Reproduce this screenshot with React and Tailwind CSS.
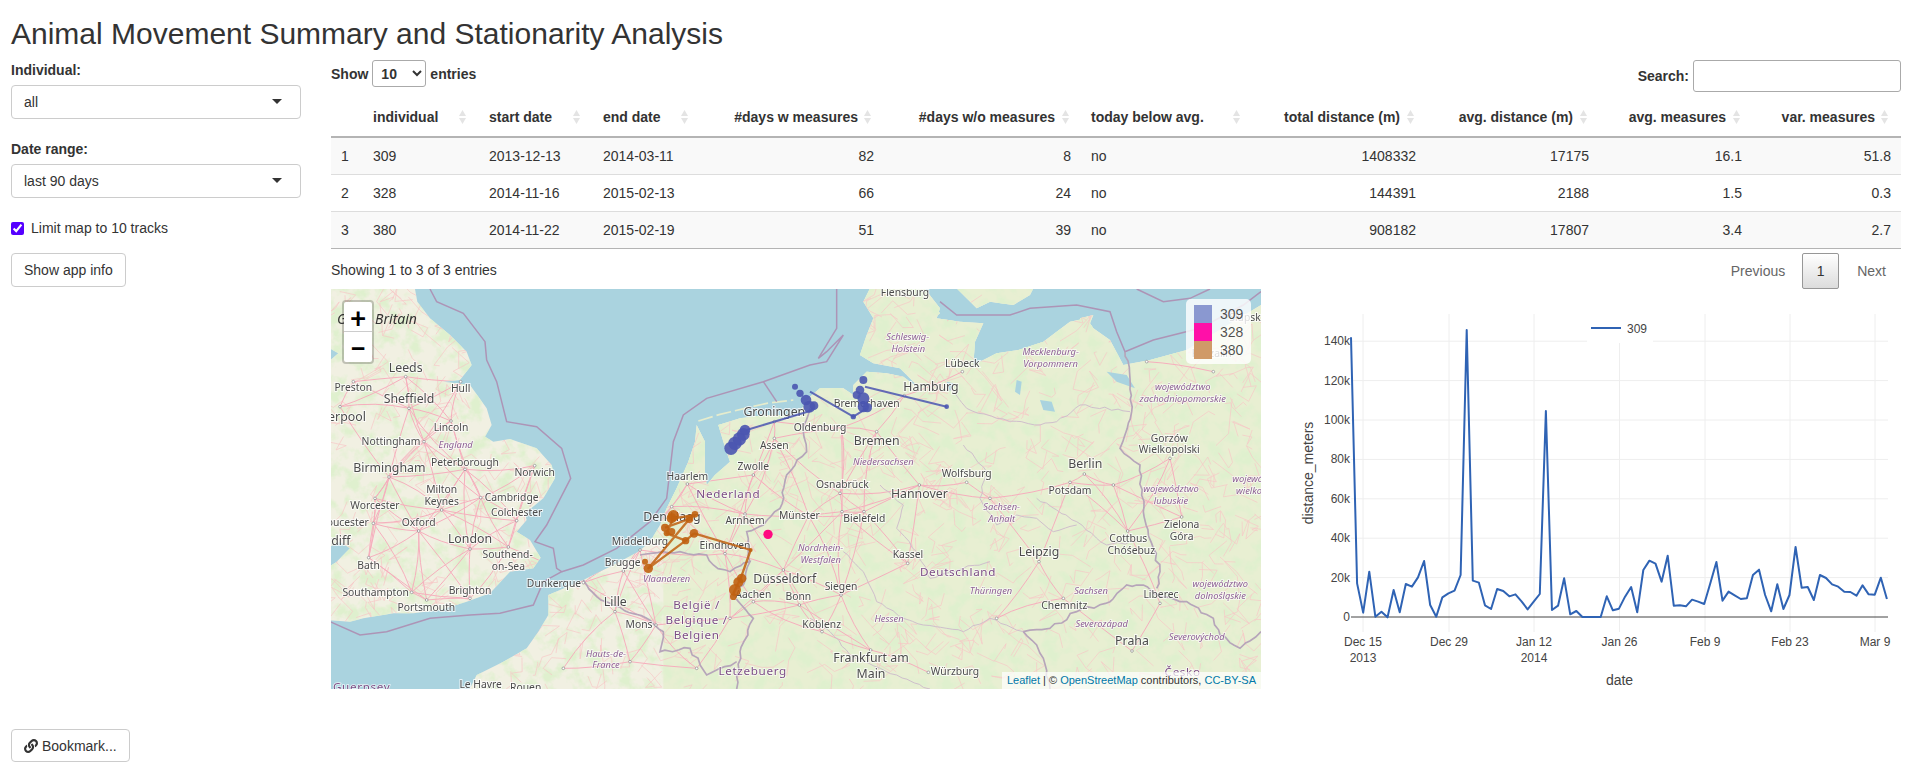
import React from 'react';
import { FaLink } from 'react-icons/fa';

const columns = [
  { label: '', w: 32 },
  { label: 'individual', w: 116, sort: 13 },
  { label: 'start date', w: 114, sort: 13 },
  { label: 'end date', w: 108, sort: 13 },
  { label: '#days w measures', w: 183, num: true, sort: 13 },
  { label: '#days w/o measures', w: 197, num: true, sort: 12 },
  { label: 'today below avg.', w: 172, sort: 13 },
  { label: 'total distance (m)', w: 173, num: true, sort: 12 },
  { label: 'avg. distance (m)', w: 173, num: true, sort: 12 },
  { label: 'avg. measures', w: 153, num: true, sort: 12 },
  { label: 'var. measures', w: 149, num: true, sort: 13 },
];

const rows = [
  ['1', '309', '2013-12-13', '2014-03-11', '82', '8', 'no', '1408332', '17175', '16.1', '51.8'],
  ['2', '328', '2014-11-16', '2015-02-13', '66', '24', 'no', '144391', '2188', '1.5', '0.3'],
  ['3', '380', '2014-11-22', '2015-02-19', '51', '39', 'no', '908182', '17807', '3.4', '2.7'],
];

function SortIcon({ right }) {
  return (
    <svg className="absolute top-[12px]" style={{ right }} width="7" height="14" viewBox="0 0 7 14">
      <path d="M3.5 0 L7 6 L0 6 Z" fill="#e4e4e4" />
      <path d="M3.5 14 L7 8 L0 8 Z" fill="#e4e4e4" />
    </svg>
  );
}

function Picker({ value }) {
  return (
    <div className="flex items-center justify-between w-[290px] h-[34px] border border-[#ccc] rounded-[4px] pl-3 pr-[18px] bg-white">
      <span>{value}</span>
      <span className="w-0 h-0 border-x-[5px] border-x-transparent border-t-[5px] border-t-[#333] -mt-0.5" />
    </div>
  );
}

function Sidebar() {
  return (
    <aside className="w-[331px] pl-[11px] shrink-0">
      <div className="font-bold h-5 mb-[5px]">Individual:</div>
      <Picker value="all" />
      <div className="font-bold h-5 mb-[5px] mt-5">Date range:</div>
      <Picker value="last 90 days" />
      <label className="flex items-center gap-[7px] h-5 mt-5">
        <input type="checkbox" defaultChecked className="w-[13px] h-[13px] accent-[#5500ff]" />
        Limit map to 10 tracks
      </label>
      <button className="block mt-[15px] h-[34px] px-3 border border-[#ccc] rounded-[4px] bg-white">Show app info</button>
    </aside>
  );
}

function DataTable() {
  return (
    <table className="w-full table-fixed border-separate border-spacing-0">
      <colgroup>
        {columns.map((c, i) => <col key={i} style={{ width: c.w }} />)}
      </colgroup>
      <thead>
        <tr>
          {columns.map((c, i) => (
            <th key={i} className={`relative h-[40px] border-b-2 border-[#b4b4b4] font-bold ${c.num ? 'text-right pr-[26px]' : 'text-left pl-[10px]'}`}>
              {c.label}
              {c.sort && <SortIcon right={c.sort} />}
            </th>
          ))}
        </tr>
      </thead>
      <tbody>
        {rows.map((r, ri) => (
          <tr key={ri} className={ri % 2 === 0 ? 'bg-[#f9f9f9]' : 'bg-white'}>
            {r.map((v, i) => (
              <td key={i} className={`h-[37px] px-[10px] border-b ${ri === 2 ? 'border-[#b4b4b4]' : 'border-[#ddd]'} ${columns[i].num ? 'text-right' : 'text-left'}`}>{v}</td>
            ))}
          </tr>
        ))}
      </tbody>
    </table>
  );
}

// map tiles, all in 3x coordinates of the page (origin at 330,285)
function rng(seed) {
  let a = seed;
  return () => {
    a |= 0; a = (a + 0x6d2b79f5) | 0;
    let t = Math.imul(a ^ (a >>> 15), 1 | a);
    t = (t + Math.imul(t ^ (t >>> 7), 61 | t)) ^ t;
    return ((t ^ (t >>> 14)) >>> 0) / 4294967296;
  };
}

const pts = (list) => list.map(([x, y]) => `${x},${y}`).join(' ');

// break a straight border into small wobbly steps
function wobble(list, r, amp = 9) {
  const out = [list[0]];
  for (let i = 1; i < list.length; i++) {
    const [ax, ay] = list[i - 1];
    const [bx, by] = list[i];
    const steps = Math.max(2, Math.round(Math.hypot(bx - ax, by - ay) / 18));
    for (let k = 1; k <= steps; k++) {
      const t = k / steps;
      const j = k === steps ? 0 : amp;
      out.push([ax + (bx - ax) * t + (r() - 0.5) * j, ay + (by - ay) * t + (r() - 0.5) * j]);
    }
  }
  return out;
}

const britain = [[-10, -10], [255, -10], [255, 12], [262, 50], [300, 100], [360, 150], [410, 200], [425, 240], [390, 285], [340, 290], [420, 300], [470, 370], [485, 420], [465, 455], [490, 470], [540, 462], [620, 490], [665, 540], [675, 580], [640, 640], [585, 685], [590, 705], [560, 740], [600, 765], [632, 818], [610, 850], [540, 860], [480, 925], [410, 950], [330, 975], [250, 985], [190, 985], [100, 1000], [60, 1010], [-10, 1005], [-10, 850], [20, 830], [60, 790], [30, 770], [-10, 790], [-10, 235], [25, 205], [-10, 185]];

const mainland = [[415, 1220], [440, 1170], [520, 1130], [590, 1090], [625, 1040], [655, 990], [655, 930], [760, 885], [850, 840], [925, 800], [960, 770], [990, 720], [1010, 670], [1040, 610], [1075, 530], [1095, 470], [1100, 420], [1125, 470], [1125, 560], [1130, 600], [1155, 570], [1200, 530], [1180, 470], [1165, 420], [1230, 400], [1310, 390], [1400, 392], [1440, 335],
  [1470, 310], [1540, 310], [1570, 330], [1570, 300], [1610, 260], [1670, 265], [1720, 275], [1780, 320], [1710, 250], [1630, 235], [1590, 210], [1610, 150], [1630, 100], [1600, 50], [1630, -10], [1785, -10], [1785, 12], [1830, 70], [1820, 100], [1890, 110], [1960, 115], [1935, 170], [1930, 240], [2000, 205], [2065, 195], [2140, 170], [2220, 110], [2270, 100], [2290, 130], [2340, 165], [2380, 240], [2460, 225], [2570, 195], [2793, 60], [2830, 60], [2830, 1230], [415, 1230]];

const islands = [
  [[1860, -10], [1940, 70], [1980, 50], [2050, 60], [2100, 30], [2120, -10]],
  [[2250, 100], [2290, 90], [2270, 140]],
  [[1780, 90], [1810, 60], [1830, 85], [1800, 110]],
];

const water = [
  [[2330, 260], [2390, 270], [2415, 310], [2360, 290]],
  [[2130, 345], [2165, 350], [2175, 380], [2140, 375]],
  [[2060, 285], [2075, 290], [2070, 330], [2055, 320]],
  [[1850, 290], [1870, 295], [1860, 320]],
];

const coastStrips = [
  [[1105, 408], [1170, 388], [1245, 370], [1310, 355], [1390, 345]],
  [[1450, 345], [1510, 335]],
];

const seaBorders = [
  [[300, 12], [320, 50], [400, 85], [465, 170], [470, 225], [500, 290], [530, 410], [620, 425], [695, 490], [722, 580], [650, 720], [615, 770], [670, 790], [680, 850], [695, 860], [640, 890], [610, 960], [510, 985], [420, 990], [300, 1000], [170, 1040], [90, 1050], [0, 1010]],
  [[695, 860], [760, 840], [860, 790], [960, 710], [1010, 640], [1030, 470], [1060, 390], [1130, 340], [1300, 290], [1440, 240], [1490, 230], [1540, 150], [1490, 200], [1465, 220], [1520, 130], [1520, 12]],
  [[1300, 290], [1340, 350]],
  [[1830, 50], [1880, 90], [2040, 90], [2100, 70], [2240, 60], [2340, 80], [2360, 140], [2385, 200], [2470, 165], [2610, 130], [2740, 60], [2793, 20]],
  [[2420, 12], [2500, 50], [2580, 40], [2640, 12]],
];

const landBorders = [
  [[760, 885], [800, 935], [850, 960], [950, 1000], [1000, 1040], [990, 1100], [1080, 1090], [1130, 1170], [1220, 1130]],
  [[930, 810], [1050, 800], [1130, 810], [1150, 840], [1200, 860], [1260, 830], [1240, 900], [1210, 930], [1270, 1000], [1230, 1100], [1220, 1212]],
  [[1260, 830], [1250, 740], [1300, 720], [1350, 670], [1370, 570], [1430, 500], [1420, 440], [1440, 370]],
  [[2080, 1040], [2160, 1030], [2240, 980], [2340, 950], [2390, 900], [2440, 900], [2480, 930], [2570, 950], [2650, 1000], [2670, 1050], [2730, 1090], [2793, 1040]],
  [[2080, 1040], [2120, 1080], [2140, 1120], [2160, 1212]],
  [[2385, 200], [2400, 280], [2405, 380], [2370, 490], [2430, 540], [2440, 680], [2470, 790], [2490, 860], [2480, 910]],
];

const stateLines = [
  [[1860, 310], [1910, 370], [2000, 400], [2130, 420], [2180, 410], [2250, 360], [2400, 380]],
  [[1900, 480], [1970, 560], [1950, 640], [2000, 720], [2060, 690], [2120, 700], [2170, 740], [2240, 720]],
  [[1650, 600], [1720, 660], [1700, 730], [1760, 800], [1800, 880], [1900, 850], [1980, 830]],
  [[1540, 800], [1600, 860], [1640, 950], [1720, 1000], [1780, 1020], [1900, 1040], [1980, 1000], [2080, 1040]],
  [[1440, 1000], [1500, 1040], [1560, 1110], [1700, 1170], [1800, 1212]],
  [[2120, 640], [2240, 710], [2330, 780], [2420, 770]],
];

const nodes = [[70, 290], [227, 275], [392, 290], [237, 370], [30, 365], [363, 408], [282, 470], [177, 576], [405, 553], [614, 542], [335, 675], [135, 640], [452, 638], [560, 707], [130, 715], [266, 738], [420, 792], [535, 786], [116, 818], [245, 922], [420, 940], [290, 945], [760, 893], [855, 980], [978, 1020], [1072, 597], [1270, 570], [1333, 460], [1333, 410], [1245, 687], [930, 795], [1185, 806], [880, 858], [1360, 855], [1270, 950], [1408, 960], [1025, 665], [1535, 428], [1640, 440], [1530, 625], [1768, 600], [1910, 592], [1602, 680], [1733, 835], [2127, 830], [2263, 567], [2220, 592], [1723, 332], [1897, 260], [1725, 30], [2520, 520], [2393, 738], [2200, 940], [2490, 955], [2555, 696], [2406, 1098], [1622, 1095], [1795, 1162], [1476, 1040], [1533, 930], [1436, 692], [1536, 680], [2450, 230], [2350, 600], [2650, 260], [1980, 640], [2000, 1000], [1200, 1000], [1100, 1150], [700, 1150], [900, 1130]];

function buildScatter() {
  const r = rng(42);
  const roads = [];
  nodes.forEach((a, i) => {
    nodes.forEach((b, j) => {
      if (j <= i) return;
      const d = Math.hypot(a[0] - b[0], a[1] - b[1]);
      if (d > 260) return;
      const mx = (a[0] + b[0]) / 2 + (r() - 0.5) * d * 0.2;
      const my = (a[1] + b[1]) / 2 + (r() - 0.5) * d * 0.2;
      roads.push(`M${a[0]} ${a[1]} Q${mx} ${my} ${b[0]} ${b[1]}`);
    });
  });
  const minor = [];
  for (let i = 0; i < 900; i++) {
    let x = r() * 2800;
    let y = r() * 1210;
    let d = `M${x} ${y}`;
    for (let k = 0; k < 3; k++) {
      x += (r() - 0.5) * 110;
      y += (r() - 0.5) * 110;
      d += ` L${x} ${y}`;
    }
    minor.push(d);
  }
  return {
    roads,
    minor,
    seaBorders,
    landBorders: landBorders.map((p) => wobble(p, r)),
    stateLines: stateLines.map((p) => wobble(p, r, 7)),
  };
}

const scatter = buildScatter();

const S = 31, M = 37;
const cityLabels = [
  ['Leeds', 227, 250, M], ['Preston', 70, 310, S], ['Hull', 392, 312, S], ['Sheffield', 237, 345, M], ['Liverpool', 27, 398, M], ['Lincoln', 363, 430, S], ['Nottingham', 183, 472, S], ['Birmingham', 178, 550, M], ['Peterborough', 405, 535, S], ['Norwich', 614, 566, S], ['Milton', 335, 616, S], ['Keynes', 335, 653, S], ['Worcester', 135, 664, S], ['Cambridge', 545, 640, S], ['Colchester', 560, 686, S], ['Gloucester', 38, 715, S], ['Oxford', 266, 716, S], ['London', 420, 763, M], ['Cardiff', 3, 770, M], ['Bath', 116, 843, S], ['Southend-', 533, 810, S], ['on-Sea', 535, 846, S], ['Southampton', 137, 926, S], ['Brighton', 420, 920, S], ['Portsmouth', 289, 970, S], ['Dunkerque', 672, 897, S], ['Lille', 856, 953, M], ['Mons', 927, 1021, S], ['Le Havre', 452, 1202, S], ['Rouen', 587, 1210, S],
  ['Haarlem', 1072, 576, S], ['Zwolle', 1270, 548, S], ['Assen', 1333, 484, S], ['Groningen', 1333, 383, M], ['Oldenburg', 1470, 430, S], ['Münster', 1408, 693, S], ['Den Haag', 1026, 697, M], ['Arnhem', 1245, 710, S], ['Middelburg', 930, 772, S], ['Eindhoven', 1185, 785, S], ['Brugge', 878, 836, S], ['Düsseldorf', 1364, 885, M], ['Aachen', 1270, 930, S], ['Bonn', 1405, 938, S], ['Koblenz', 1475, 1020, S], ['Siegen', 1533, 908, S],
  ['Bremerhaven', 1610, 357, S], ['Bremen', 1640, 471, M], ['Osnabrück', 1537, 600, S], ['Hannover', 1768, 629, M], ['Wolfsburg', 1910, 568, S], ['Bielefeld', 1603, 704, S], ['Kassel', 1734, 812, S], ['Leipzig', 2127, 802, M], ['Berlin', 2266, 538, M], ['Potsdam', 2220, 620, S], ['Hamburg', 1803, 307, M], ['Lübeck', 1897, 238, S], ['Flensburg', 1725, 25, S], ['Gorzów', 2518, 462, S], ['Wielkopolski', 2518, 497, S], ['Zielona', 2555, 720, S], ['Góra', 2555, 756, S], ['Cottbus', 2395, 762, S], ['Chóśebuz', 2404, 798, S], ['Chemnitz', 2203, 965, S], ['Liberec', 2493, 930, S], ['Praha', 2406, 1070, M], ['Frankfurt am', 1623, 1122, M], ['Main', 1623, 1168, M], ['Würzburg', 1875, 1163, S], ['Koszalin', 2645, 207, S], ['Słupsk', 2745, 100, S],
];

const stateLabels = [
  ['England', 377, 482], ['Vlaanderen', 1010, 883], ['Hauts-de-', 828, 1107], ['France', 828, 1142], ['Nordrhein-', 1472, 790], ['Westfalen', 1472, 827], ['Niedersachsen', 1660, 532], ['Thüringen', 1983, 918], ['Sachsen-', 2015, 667], ['Anhalt', 2015, 702], ['Schleswig-', 1733, 158], ['Holstein', 1735, 194], ['Mecklenburg-', 2162, 203], ['Vorpommern', 2162, 238], ['województwo', 2558, 307], ['zachodniopomorskie', 2558, 342], ['województwo', 2790, 582], ['wielkopolskie', 2800, 618], ['województwo', 2523, 614], ['lubuskie', 2523, 650], ['Sachsen', 2283, 918], ['województwo', 2671, 899], ['dolnośląskie', 2671, 934], ['Severozápad', 2315, 1018], ['Severovýchod', 2600, 1057], ['Hessen', 1677, 1003],
];

const countryLabels = [
  ['Nederland', 1195, 630], ['België /', 1100, 963], ['Belgique /', 1100, 1008], ['Belgien', 1100, 1052], ['Letzebuerg', 1268, 1160], ['Deutschland', 1884, 864], ['Česko', 2558, 1165], ['Guernsey', 95, 1208],
];

const blueDots = [[1203, 490, 20], [1215, 475, 20], [1228, 462, 20], [1240, 448, 19], [1245, 435, 16], [1395, 305, 9], [1410, 325, 11], [1428, 345, 16], [1438, 365, 18], [1452, 362, 13], [1600, 285, 12], [1590, 315, 13], [1580, 330, 12], [1600, 340, 18], [1600, 365, 17], [1612, 368, 14], [1570, 395, 8], [1850, 365, 7]];
const orangeDots = [[1030, 692, 17], [1025, 700, 15], [1005, 728, 12], [1095, 688, 10], [1078, 702, 12], [1010, 745, 9], [1025, 740, 11], [1092, 745, 13], [1067, 767, 11], [955, 850, 14], [945, 830, 9], [1262, 795, 6], [1235, 880, 14], [1225, 892, 15], [1215, 915, 18], [1210, 935, 10]];

function MapTiles() {
  return (
    <svg viewBox="3 12 2790 1200" className="block w-full h-full">
      <defs>
        <clipPath id="land">
          <polygon points={pts(britain)} />
          <polygon points={pts(mainland)} />
          {islands.map((p, i) => <polygon key={i} points={pts(p)} />)}
        </clipPath>
        <filter id="soft" x="0" y="0" width="100%" height="100%">
          <feGaussianBlur stdDeviation="1.3" />
        </filter>
        <filter id="forest" x="0" y="0" width="100%" height="100%">
          <feTurbulence type="fractalNoise" baseFrequency="0.022" numOctaves="4" seed="7" />
          <feColorMatrix values="0 0 0 0 0.74  0 0 0 0 0.87  0 0 0 0 0.62  4 0 0 0 -1.75" />
        </filter>
      </defs>
      <g filter="url(#soft)">
        <rect x="-20" y="-20" width="2900" height="1300" fill="#aad3df" />
        <g clipPath="url(#land)">
          <rect x="-20" y="-20" width="2900" height="1300" fill="#f1f0e2" />
          <rect x="1000" y="-20" width="1880" height="1300" fill="#e8efd2" />
          <rect x="-20" y="-20" width="2900" height="1300" filter="url(#forest)" />
          {scatter.minor.map((d, i) => <path key={i} d={d} fill="none" stroke="#f7c6c6" strokeWidth="2" />)}
          {scatter.roads.map((d, i) => <path key={i} d={d} fill="none" stroke="#f6aebd" strokeWidth="3" />)}
        </g>
        {water.map((p, i) => <polygon key={i} points={pts(p)} fill="#aad3df" />)}
        {coastStrips.map((p, i) => <polyline key={i} points={pts(p)} fill="none" stroke="#e6eccd" strokeWidth="5" strokeDasharray="45 12" />)}
        {scatter.stateLines.map((p, i) => <polyline key={i} points={pts(p)} fill="none" stroke="#cfbfcc" strokeWidth="3" />)}
        {scatter.seaBorders.map((p, i) => <polyline key={i} points={pts(p)} fill="none" stroke="#ad94b6" strokeWidth="4.5" />)}
        {scatter.landBorders.map((p, i) => <polyline key={i} points={pts(p)} fill="none" stroke="#b6a5ba" strokeWidth="5" />)}
        {nodes.map(([x, y], i) => <circle key={i} cx={x} cy={y} r="4" fill="#fff" stroke="#888" strokeWidth="2" />)}
        <g fontFamily="'Noto Sans', sans-serif" textAnchor="middle" dominantBaseline="middle">
          <text x="141" y="105" fontSize="42" fontStyle="italic" fill="#333">Great Britain</text>
          {cityLabels.map(([t, x, y, s]) => (
            <text key={t} x={x} y={y} fontSize={s} fill="#4c4c4c" stroke="#ffffff" strokeOpacity="0.75" strokeWidth="6" paintOrder="stroke">{t}</text>
          ))}
          {stateLabels.map(([t, x, y], i) => (
            <text key={i} x={x} y={y} fontSize="28" fontStyle="italic" fill="#8c5f93" stroke="#ffffff" strokeOpacity="0.7" strokeWidth="5" paintOrder="stroke">{t}</text>
          ))}
          {countryLabels.map(([t, x, y]) => (
            <text key={t} x={x} y={y} fontSize="35" letterSpacing="2" fill="#7c4e85" stroke="#ffffff" strokeOpacity="0.7" strokeWidth="5" paintOrder="stroke">{t}</text>
          ))}
        </g>
      </g>
      <g fill="none" stroke="#4a55b0" strokeOpacity="0.85" strokeLinejoin="round">
        <polyline points="1250,435 1440,378 1450,370" strokeWidth="6" />
        <polyline points="1440,320 1570,395 1610,370" strokeWidth="6" />
        <polyline points="1605,305 1850,365" strokeWidth="6" />
      </g>
      {blueDots.map(([x, y, r], i) => <circle key={i} cx={x} cy={y} r={r} fill="#4a55b0" fillOpacity="0.9" />)}
      <g fill="none" stroke="#c0600f" strokeOpacity="0.85" strokeWidth="7" strokeLinejoin="round">
        <polyline points="1005,728 1078,702 955,850 1067,767 1010,745 1030,700 1095,690 1078,702" />
        <polyline points="1092,745 1262,795 1232,880 1210,925" />
        <polyline points="1067,767 1092,745" />
      </g>
      {orangeDots.map(([x, y, r], i) => <circle key={i} cx={x} cy={y} r={r} fill="#c0600f" fillOpacity="0.9" />)}
      <circle cx="1314" cy="748" r="14" fill="#ff0a80" />
    </svg>
  );
}

function LeafletMap() {
  return (
    <div className="relative w-[930px] h-[400px] overflow-hidden shrink-0">
      <MapTiles />
      <div className="absolute left-[11px] top-[11px] w-[32px] rounded-[4px] bg-white border-2 border-black/20 bg-clip-padding text-black font-bold font-[Lato,'Liberation_Sans',sans-serif]">
        <div className="flex items-center justify-center h-[30px] text-[28px] leading-none border-b border-[#ccc]">+</div>
        <div className="flex items-center justify-center h-[30px] text-[28px] leading-none">−</div>
      </div>
      <div className="absolute right-[10px] top-[10px] w-[65px] h-[65px] py-[6px] pl-[8px] rounded-[5px] bg-white/80 text-black/70 leading-[18px]">
        {[['#8a98d0', '309'], ['#ff10a8', '328'], ['#d09a68', '380']].map(([c, t]) => (
          <div key={t} className="flex h-[18px] gap-2">
            <span className="w-[18px] h-[18px]" style={{ backgroundColor: c }} />
            {t}
          </div>
        ))}
      </div>
      <div className="absolute right-0 bottom-0 h-[17px] px-[5px] bg-white/70 text-[11px] leading-[17px]">
        <a className="text-[#0078a8]">Leaflet</a> | © <a className="text-[#0078a8]">OpenStreetMap</a> contributors, <a className="text-[#0078a8]">CC-BY-SA</a>
      </div>
    </div>
  );
}

const series = [112, 850, 938, 815, 950, 935, 952, 870, 937, 852, 860, 832, 783, 915, 950, 892, 880, 872, 825, 90, 842, 848, 916, 927, 867, 873, 889, 883, 904, 928, 905, 882, 333, 930, 917, 835, 943, 933, 951, 951, 951, 951, 889, 931, 926, 890, 861, 937, 810, 782, 791, 845, 767, 917, 916, 919, 899, 905, 912, 850, 786, 902, 875, 886, 897, 895, 825, 809, 885, 934, 853, 927, 885, 741, 863, 861, 900, 825, 834, 853, 860, 875, 876, 887, 856, 883, 884, 833, 897];

const xTicks = [[1363, 'Dec 15', '2013'], [1449, 'Dec 29'], [1534, 'Jan 12', '2014'], [1619.5, 'Jan 26'], [1705, 'Feb 9'], [1790, 'Feb 23'], [1875, 'Mar 9']];
const yTicks = [0, 20, 40, 60, 80, 100, 120, 140];

function LineChart() {
  const line = series.map((v, i) => `${1351 + i * 6.09},${300 + v / 3}`).join(' ');
  return (
    <svg viewBox="1261 289 640 400" className="block w-[640px] h-[400px] shrink-0" fontFamily="'Liberation Sans', sans-serif">
      {xTicks.map(([x]) => <line key={x} x1={x} x2={x} y1="314" y2="632" stroke="#eeeeee" />)}
      {yTicks.slice(1).map((k) => {
        const y = 617 - k * 1.97;
        return <line key={k} x1="1351" x2="1888" y1={y} y2={y} stroke="#eeeeee" />;
      })}
      <rect x="1587" y="314" width="66" height="29" fill="#fff" />
      <line x1="1351" x2="1888" y1="617" y2="617" stroke="#444" />
      <polyline points={line} fill="none" stroke="#2f63b4" strokeWidth="2" strokeLinejoin="round" />
      <line x1="1591" x2="1621" y1="328" y2="328" stroke="#2f63b4" strokeWidth="2" />
      <text x="1627" y="333" fontSize="12" fill="#444">309</text>
      {yTicks.map((k) => (
        <text key={k} x="1350" y={621 - k * 1.97} fontSize="12" fill="#444" textAnchor="end">{k ? `${k}k` : '0'}</text>
      ))}
      {xTicks.map(([x, a, b]) => (
        <g key={x} fontSize="12" fill="#444" textAnchor="middle">
          <text x={x} y="646">{a}</text>
          {b && <text x={x} y="662">{b}</text>}
        </g>
      ))}
      <text x="1619.5" y="685" fontSize="14" fill="#444" textAnchor="middle">date</text>
      <text transform="translate(1313 473) rotate(-90)" fontSize="14" fill="#444" textAnchor="middle">distance_meters</text>
    </svg>
  );
}

export default function App() {
  return (
    <div className="w-[1910px] font-['Liberation_Sans',Arial,sans-serif] text-sm leading-5 text-[#333] bg-white">
      <h2 className="h-[60px] pt-[17px] pl-[11px] text-[30px] leading-[33px]">Animal Movement Summary and Stationarity Analysis</h2>
      <div className="flex">
        <Sidebar />
        <main className="w-[1570px]">
          <div className="flex justify-between h-[38px]">
            <label className="flex items-start gap-1 font-bold">
              <span className="mt-[4px]">Show</span>
              <select defaultValue="10" className="w-[54px] h-[27px] pl-1 border border-[#aaa] rounded-[3px] bg-white font-bold">
                <option value="10">10</option>
                <option value="25">25</option>
              </select>
              <span className="mt-[4px]">entries</span>
            </label>
            <label className="flex items-start gap-1 font-bold">
              <span className="mt-[6px]">Search:</span>
              <input className="w-[208px] h-[32px] border border-[#aaa] rounded-[3px] bg-white" />
            </label>
          </div>
          <DataTable />
          <div className="flex justify-between h-[40px]">
            <div className="pt-[11px]">Showing 1 to 3 of 3 entries</div>
            <div className="flex items-start pt-[4px] pr-[15px] text-[#666]">
              <span className="mt-[8px] mr-[17px]">Previous</span>
              <span className="flex items-center justify-center w-[37px] h-[36px] mr-[18px] border border-[#979797] rounded-[2px] bg-gradient-to-b from-white to-[#dcdcdc] text-[#333]">1</span>
              <span className="mt-[8px]">Next</span>
            </div>
          </div>
          <div className="flex">
            <LeafletMap />
            <LineChart />
          </div>
        </main>
      </div>
      <button className="flex items-center gap-1 ml-[11px] mt-[40px] h-[33px] px-3 border border-[#ccc] rounded-[4px] bg-white">
        <FaLink className="w-[14px] h-[14px]" /> Bookmark...
      </button>
    </div>
  );
}
